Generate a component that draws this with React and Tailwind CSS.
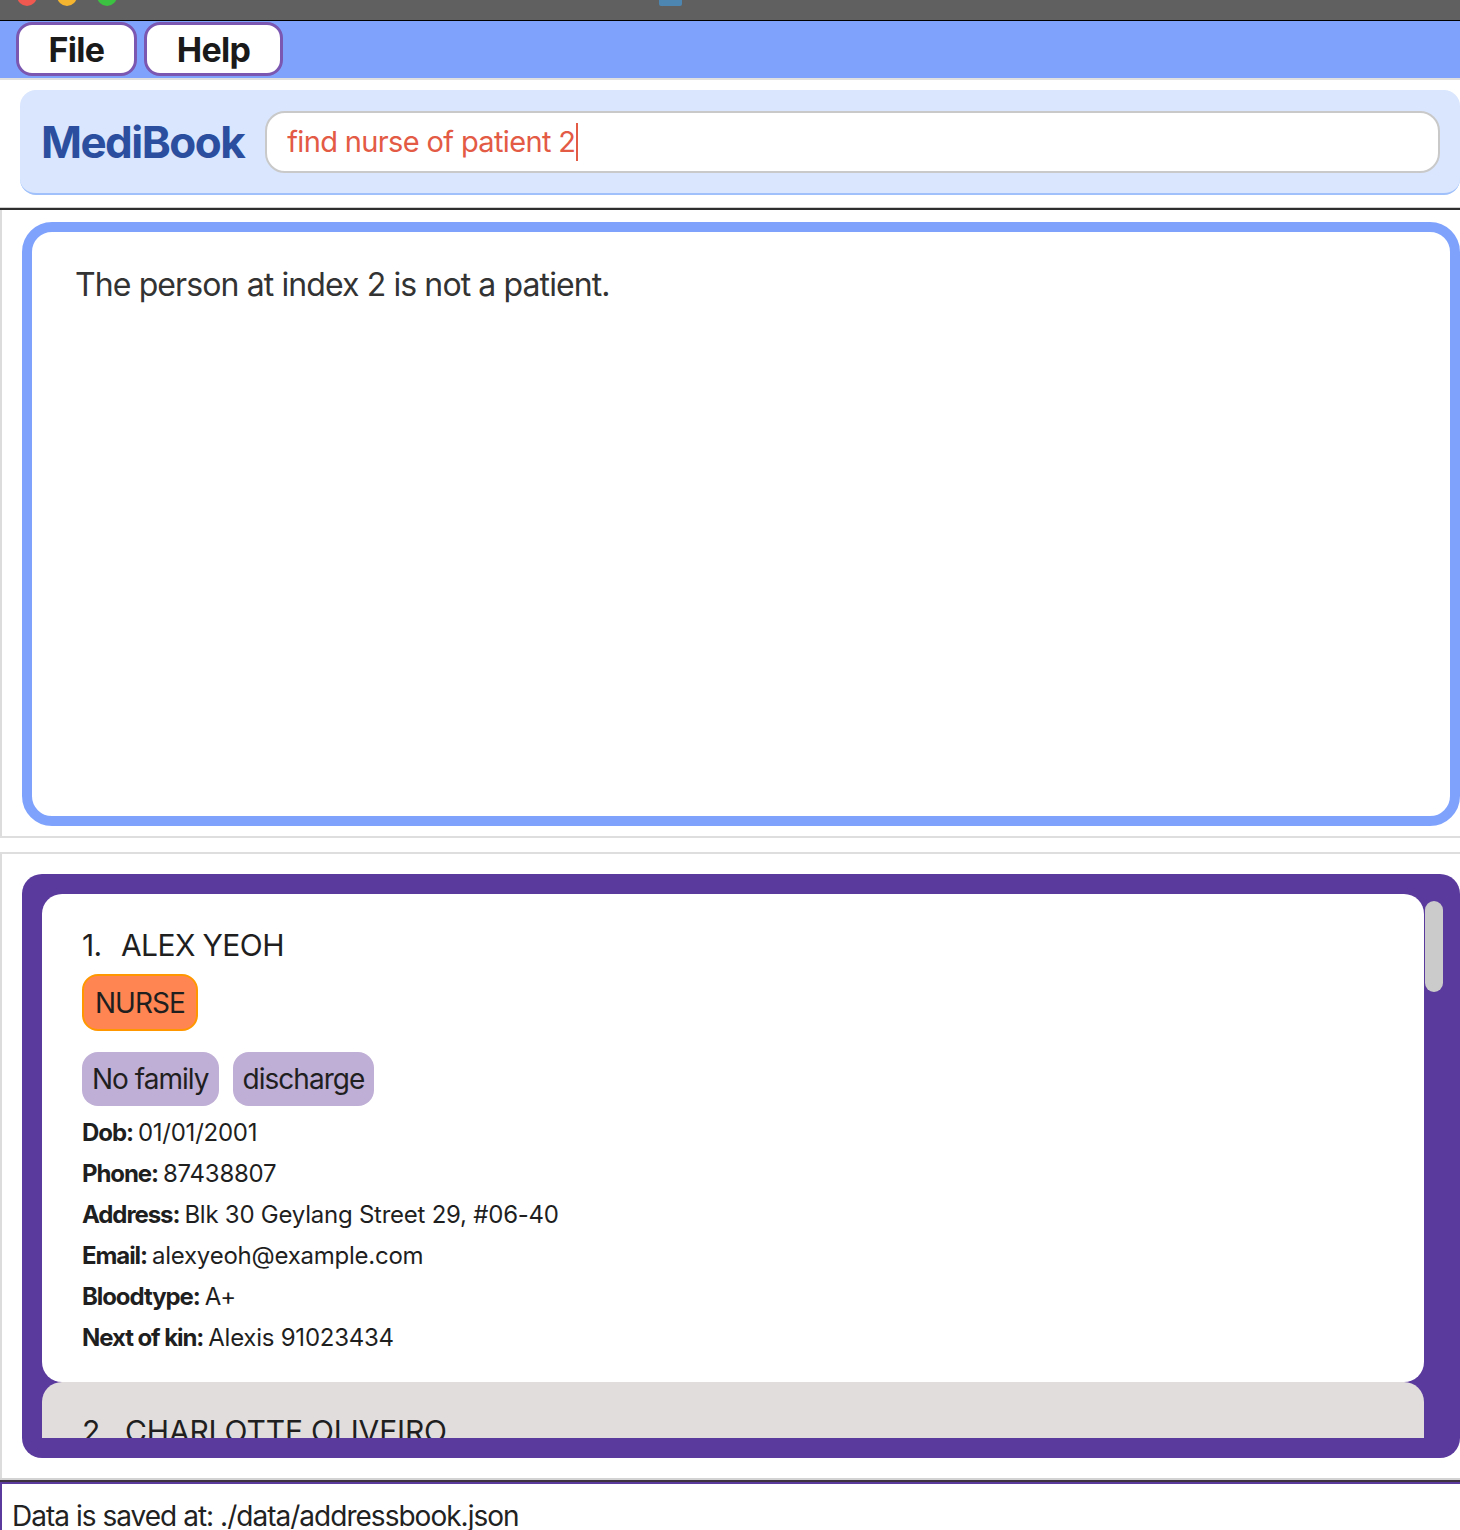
import React from 'react';

const FONT = { fontFamily: 'Inter, "Noto Sans", sans-serif' };

function MenuButton({ label, width }) {
  return (
    <button className={`h-[54px] ${width} rounded-[16px] border-[3px] border-[#7b57b1] bg-white text-[34px] font-bold tracking-[-0.02em] text-[#1a1a1a] flex items-center justify-center`}>
      {label}
    </button>
  );
}

function Field({ label, value }) {
  return (
    <div className="h-[41px] flex items-center text-[24px] text-[#1f1f1f] tracking-[-0.01em]">
      <span className="font-bold tracking-[-0.045em] mr-[5px]">{label}:</span>
      <span>{value}</span>
    </div>
  );
}

export default function App() {
  return (
    <div className="w-[1460px] h-[1530px] overflow-hidden flex flex-col bg-white" style={FONT}>
      {/* window title bar */}
      <div className="h-[21px] shrink-0 bg-[#616060] border-b border-black relative overflow-hidden">
        <div className="flex gap-[20px] pl-[17px] -mt-[14px]">
          <div className="w-[20px] h-[20px] rounded-full bg-[#f0594f]" />
          <div className="w-[20px] h-[20px] rounded-full bg-[#f5b52f]" />
          <div className="w-[20px] h-[20px] rounded-full bg-[#3bc240]" />
        </div>
        <div className="absolute left-[659px] top-0 w-[23px] h-[6px] rounded-b-[2px] bg-[#4d86b0]" />
      </div>

      {/* menu bar */}
      <div className="h-[57px] shrink-0 bg-[#7fa3fd] flex items-start gap-[7px] pl-[16px] pt-[1px]">
        <MenuButton label="File" width="w-[121px]" />
        <MenuButton label="Help" width="w-[139px]" />
      </div>
      <div className="h-[2px] shrink-0 bg-[#e0e0e0]" />

      {/* command box */}
      <div className="h-[127px] shrink-0 pt-[10px] pl-[20px]">
        <div className="h-[105px] rounded-[16px] bg-[#d9e6fd] border-b-2 border-[#9fc0fa] flex items-center pl-[21px] pr-[20px]">
          <div className="text-[44px] font-bold tracking-[-0.035em] text-[#2b4f9e] mr-[21px]">MediBook</div>
          <div className="flex-1 h-[62px] rounded-[20px] border-2 border-[#c9c9c9] bg-white flex items-center pl-[20px]">
            <span className="text-[29px] text-[#e35a45] tracking-[-0.022em]">find nurse of patient 2</span>
            <span className="w-[2px] h-[38px] bg-[#e35a45] ml-[1px]" />
          </div>
        </div>
      </div>
      <div className="h-[1px] shrink-0 bg-[#cfcfcf]" />
      <div className="h-[2px] shrink-0 bg-[#2e2e2e]" />

      {/* result display */}
      <div className="h-[626px] shrink-0 border-l-2 border-[#dcdcdc] pt-[12px] pl-[20px]">
        <div className="h-[604px] rounded-[30px] border-[10px] border-[#7fa3fd] bg-white pl-[43px] pt-[29px]">
          <div className="text-[32px] text-[#333333] tracking-[-0.028em]">The person at index 2 is not a patient.</div>
        </div>
      </div>
      <div className="h-[2px] shrink-0 bg-[#dedede]" />
      <div className="h-[14px] shrink-0" />
      <div className="h-[2px] shrink-0 bg-[#dedede]" />

      {/* person list */}
      <div className="h-[624px] shrink-0 border-l-2 border-[#dcdcdc] pt-[20px] pl-[20px] pb-[20px]">
        <div className="h-[584px] rounded-[20px] bg-[#5b3a9e] flex pt-[20px] pl-[20px] pb-[20px]">
          <div className="flex-1 overflow-hidden flex flex-col">
            <div className="h-[488px] shrink-0 rounded-[20px] bg-white pl-[40px] pt-[33px]">
              <div className="text-[30px] text-[#1f1f1f] tracking-[-0.02em] h-[36px] flex items-center">
                <span className="w-[39px]">1.</span>
                <span>ALEX YEOH</span>
              </div>
              <div className="mt-[11px] flex">
                <div className="h-[57px] px-[11px] rounded-[16px] border-2 border-[#ff9800] bg-[#ff8552] text-[28px] tracking-[-0.035em] text-[#1f1f1f] flex items-center">NURSE</div>
              </div>
              <div className="mt-[21px] flex gap-[14px]">
                <div className="h-[54px] px-[10px] rounded-[16px] bg-[#bfaed6] text-[28px] tracking-[-0.035em] text-[#1f1f1f] flex items-center">No family</div>
                <div className="h-[54px] px-[10px] rounded-[16px] bg-[#bfaed6] text-[28px] tracking-[-0.035em] text-[#1f1f1f] flex items-center">discharge</div>
              </div>
              <div className="mt-[6px] flex flex-col">
                <Field label="Dob" value="01/01/2001" />
                <Field label="Phone" value="87438807" />
                <Field label="Address" value="Blk 30 Geylang Street 29, #06-40" />
                <Field label="Email" value="alexyeoh@example.com" />
                <Field label="Bloodtype" value="A+" />
                <Field label="Next of kin" value="Alexis 91023434" />
              </div>
            </div>
            <div className="h-[120px] shrink-0 rounded-[20px] bg-[#e2dddd] pl-[40px] pt-[31px]">
              <div className="text-[30px] text-[#1f1f1f] tracking-[-0.005em] h-[36px] flex items-center">
                <span className="w-[43px]">2.</span>
                <span>CHARLOTTE OLIVEIRO</span>
              </div>
            </div>
          </div>
          <div className="w-[36px] shrink-0 pt-[7px] pl-[1px]">
            <div className="w-[18px] h-[91px] rounded-full bg-[#cbcbcb]" />
          </div>
        </div>
      </div>

      {/* status bar */}
      <div className="h-[2px] shrink-0 bg-[#d3d3d3]" />
      <div className="h-[2px] shrink-0 bg-[#3d3340]" />
      <div className="h-[2px] shrink-0 bg-[#5b3a9e]" />
      <div className="flex-1 border-l-2 border-[#5b3a9e] pl-[10px] pt-[14px]">
        <div className="text-[28px] text-[#222222] tracking-[-0.035em] leading-[36px]">Data is saved at: ./data/addressbook.json</div>
      </div>
    </div>
  );
}
